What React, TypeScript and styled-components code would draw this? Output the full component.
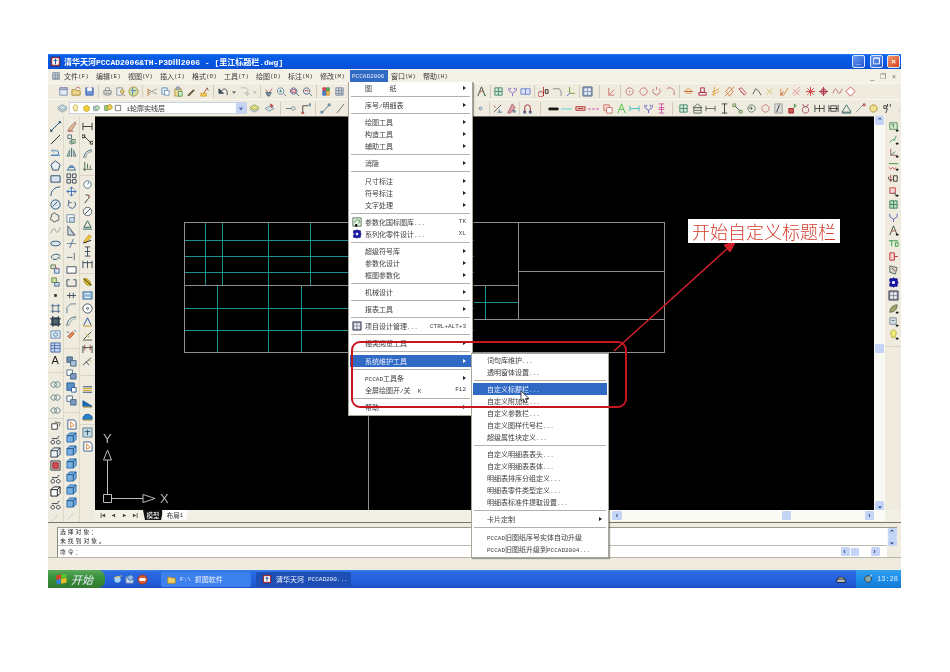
import React from "react";
import styled, { createGlobalStyle } from "styled-components";

const CJK = '"Noto Sans CJK SC", "Liberation Sans", sans-serif';
const MIX = '"Liberation Mono", "Noto Sans CJK SC", monospace';
const CREAM = "#efecdf";

const Global = createGlobalStyle`
  html, body { margin: 0; padding: 0; background: #fff; }
  body { width: 950px; height: 672px; overflow: hidden; font-family: ${CJK}; }
`;

type G = [string, string?, string?];
const IC: Record<string, G[]> = {
  newdoc: [["M2 2h8v8H2z", "#7d8ca8", "#e6ecf6"], ["M2 2h8v2H2z", "#7d8ca8", "#b9c8e6"]],
  open: [["M1 4h4l1 1h4v5H1z", "#a98a3a", "#ecd68c"], ["M5 3l3-2 2 2", "#c05a4a"]],
  save: [["M2 2h8v8H2z", "#3f62a8", "#6f94d8"], ["M4 2h4v3H4z", "#fff", "#fff"]],
  print: [["M2 5h8v4H2z", "#8a8a8a", "#d8d8d8"], ["M4 2h4v3H4zM4 8h4v2H4z", "#8a8a8a", "#fff"]],
  preview: [["M2 2h6v8H2z", "#8a94a8", "#f0f0f0"], ["M8 8a2 2 0 1 0-.1 0zM9 9l2 2", "#a07a30", "#e8d890"]],
  publish: [["M6 1a5 5 0 1 0 .1 0z", "#a0903a", "#cfe0a0"], ["M3 5h6M5 2v8", "#5a7fc8"]],
  cut: [["M1 8l10-5M1 4l10 5", "#9a9a9a"], ["M1 3.5a1.3 1.3 0 1 0 .1 0zM1 7.500a1.3 1.3 0 1 0 .1 0z", "#d08030"]],
  copy: [["M2 2h6v7H2z", "#6f93b8", "#dbe9f6"], ["M5 5h5v5H5z", "#6f93b8", "#fff"]],
  paste: [["M2 3h7v8H2z", "#b09a50", "#e8d890"], ["M4 1h3v3H4z", "#7a8a9a", "#b8c8d8"], ["M6 6h4v5H6z", "#5a9a5a", "#d8f0d8"]],
  brush: [["M2 10l6-6 1 1-6 6z", "#6a5a3a", "#7a6a4a"]],
  match: [["M2 8h6v3H2z", "#d8a040", "#f0d050"], ["M5 8l4-6", "#c05040"], ["M9 2l1 3", "#5a5a5a"]],
  undo: [["M10 10V6a3 3 0 0 0-5-2L3 6", "#44505e"], ["M1 3v5h5z", "#44505e", "#44505e"]],
  redo: [["M2 2h5a3 3 0 0 1 2 5l-1 3", "#b8b8b0"], ["M6 7l3 4 2-3z", "#c8c8c0", "#c8c8c0"]],
  drop: [["M4 6h4l-2 3z", "#6a6a6a", "#6a6a6a"]],
  dropl: [["M4 6h4l-2 3z", "#c0c0b8", "#c0c0b8"]],
  pan: [["M3 4l3 4 4-5", "#c05868"], ["M3 7h6l-2 4H5z", "#5a7080", "#7a90a0"]],
  zoomrt: [["M5 2a3.500 3.500 0 1 0 .1 0z", "#6a8aa0", "#e8f0f4"], ["M8 8l3 3", "#6a7a8a"], ["M3.500 5.500h3M5 4v3", "#4a8a5a"]],
  zoomwin: [["M5 2a3.500 3.500 0 1 0 .1 0z", "#4a6a90", "#e0e8f8"], ["M8 8l3 3", "#4a5a70"], ["M3 4h4v3H3z", "#c05050"]],
  zoomprev: [["M5 2a3.500 3.500 0 1 0 .1 0z", "#5a6a80", "#e0e4ea"], ["M8 8l3 3", "#5a6a80"], ["M3 5h4", "#c04040"]],
  props: [["M2 2h3v3H2z", "#c03048", "#e06070"], ["M6 2h3v3H6z", "#3a8a4a", "#60c070"], ["M2 6h3v4H2z", "#2a5ab0", "#6090e0"], ["M6 6h3v4H6z", "#d09030", "#f0c050"]],
  grid: [["M2 2h8v8H2z", "#7a8898", "#d8e2ee"], ["M2 5h8M2 8h8M5 2v8M8 2v8", "#7a8898"]],
  compass: [["M6 1L2 11M6 1l4 10", "#3a4a3a"], ["M4 7l4-2", "#c05030"], ["M9 8l1 3", "#3a8a3a"]],
  gridsq: [["M2 2h8v8H2z", "#4a8a6a", "#d0e8d8"], ["M2 6h8M6 2v8", "#4a8a6a"]],
  ybranch: [["M2 2v3l4 3 4-3V2M6 8v3M4 2v2M8 2v2", "#8a60c8"]],
  ybrancht: [["M2 2v3l4 3 4-3V2M6 8v3M4 2v2M8 2v2", "#5a5ac0"]],
  rect2: [["M1 3h10v6H1z", "#6a80d0", "#dde4fa"], ["M6 3v6", "#6a80d0"]],
  dimcross: [["M6 1v10", "#b03030"], ["M3 6a3 3 0 1 0 .1 0z", "#b03030"], ["M8 4h3v4H8z", "#302020"]],
  corner: [["M2 3h7l2 3v5", "#888"]],
  lshape: [["M5 1v7h6", "#70a030"], ["M5 8L2 11", "#4a6ad0"]],
  gridicon: [["M1 1h10v10H1z", "#59708a", "#8ca0b8"], ["M3 3h2v2H3zM7 3h2v2H7zM3 7h2v2H3zM7 7h2v2H7z", "#eef", "#eef"]],
  redL: [["M3 2v8l6-6M3 10h6", "#cf7070"]],
  circ: [["M6 2a4 4 0 1 0 .1 0z", "#c47470"], ["M6 5.500a.5 .5 0 1 0 .1 0z", "#c47470"]],
  circ2: [["M6 2a4 4 0 1 0 .1 0z", "#c47470"]],
  arc: [["M3 3a4 4 0 1 0 6 0", "#c47470"], ["M6 1v3", "#c47470"]],
  arc2: [["M2 3a5 5 0 0 1 8 3v4", "#c47470"]],
  hat: [["M3 6a3 3 0 0 1 6 0", "#e0a040"], ["M1 6h10", "#c05030"], ["M3 8h6", "#e0a040"]],
  stamp: [["M4 2h4v5H4z", "#b02850"], ["M2 7h8v3H2z", "#b02850"]],
  zig: [["M2 7l8-4M2 10l8-4M5 1L4 11", "#e0a040"]],
  dcross: [["M6 1l4 5-4 5-4-5zM1 11L11 1", "#d08040"]],
  chain: [["M2 3l3-1 5 6-2 2zM3 4l5 6", "#c05868"]],
  hook: [["M2 9l3-6 3 2 3 5", "#555"]],
  xy: [["M3 3l6 6M9 3l-6 6", "#d8c060"]],
  orangeL: [["M3 3v7h3l5-8", "#d08a30"], ["M3 10l3-4", "#c04040"]],
  slashes: [["M10 1L1 9M10 4L3 11M2 3l7 7", "#e098a0"]],
  star: [["M6 1v10M1 6h10M2.500 2.500l7 7M9.500 2.500l-7 7", "#cf4040"]],
  target: [["M6 3a3 3 0 1 0 .1 0z", "#a83048", "#e0a0a8"], ["M6 1v10M1 6h10", "#a83048"]],
  wave: [["M1 8c2-6 3-6 5-2s3 2 5-3", "#c06070"]],
  diamond: [["M6 1l5 5-5 5-5-5z", "#cf5050", "#fff"]],
  layers: [["M1 5l5-3 5 3-5 3z", "#7f98a8", "#cfdce4"], ["M1 7l5 3 5-3", "#7f98a8"]],
  layersY: [["M1 5l5-3 5 3-5 3z", "#9aa048", "#e0e088"], ["M1 7l5 3 5-3", "#7f98a8"]],
  layersB: [["M1 6l5-3 5 3-5 3z", "#7f98a8", "#cfdce4"], ["M7 1l3 2-2 2z", "#c05050", "#c05050"]],
  bulb: [["M6 1a3.500 3.500 0 0 1 2 6v2H4V7a3.500 3.500 0 0 1 2-6z", "#b8a840", "#f6f0a8"]],
  sun: [["M6 2a4 4 0 1 0 .1 0z", "#c0a020", "#f0d030"]],
  leaf: [["M2 3h5v6H2z", "#8a9aa8", "#c0ccd8"], ["M7 2a3 3 0 1 0 .1 0z", "#7a9a7a", "#b8d8b8"]],
  bulbg: [["M2 3h4v6H2z", "#6a9a5a", "#a8d070"], ["M8 2a3 3 0 1 0 .1 0z", "#b09030", "#f0d050"]],
  box: [["M2 2h8v8H2z", "#444", "#fff"]],
  node: [["M1 6h6", "#6a7a8a"], ["M9 4a2 2 0 1 0 .1 0z", "#6a7a8a"]],
  cornerd: [["M3 11V3h6", "#444"], ["M10 1h2v2h-2z", "#4a7a9a"], ["M2 10h2v2H2z", "#c04040"]],
  angle: [["M2 11L10 2", "#6a7a8a"], ["M9 1h2v2H9zM1 9h2v2H1z", "#4a7a9a"]],
  slash: [["M2 11L10 1", "#6a6a6a"]],
  dot: [["M6 4.500a1.500 1.500 0 1 0 .1 0z", "#4a7aa0"]],
  pen: [["M2 10L10 2", "#5a5a5a"], ["M6 10h5M8 7v3", "#4a7a9a"], ["M2 3l2 2", "#c05030"]],
  grad: [["M3 11L8 1l3 4-5 6z", "#b06070", "#e0a0a8"], ["M9 8h2v2H9z", "#4a6a8a"]],
  magnet: [["M3 10V5a3 3 0 0 1 6 0v5", "#a02030", undefined], ["M2 9h2v2H2zM8 9h2v2H8z", "#304070"]],
  lblack: [["M1 5.500h10v2H1z", "#111", "#111"]],
  lcyan: [["M0 6.500h12", "#50d0d0"]],
  lred: [["M1 4h10v4H1z", "#b03030", "#f0d0d0"], ["M3 6h6", "#b03030"]],
  lmag: [["M0 6.500h3M4.500 6.500h3M9 6.500h3", "#d040c0"]],
  swatch: [["M2 2h6v6H2z", "#cf7060", "#f8e0d8"], ["M5 5h6v6H5z", "#cf7060", "#fff"]],
  greenA: [["M2 11L6 1l4 10M3.500 7h5", "#40c040"]],
  dimcyan: [["M1 3v6M11 3v6M1 6h10", "#40c0c0"]],
  pinkI: [["M3 1h6M3 11h6M6 1v10", "#d050a0"], ["M3 5h6M3 7h6", "#d050a0"]],
  house: [["M6 1L1 5h10zM2 5h8v6H2zM2 8h8", "#5a6a5a"]],
  dimH: [["M1 3v6M11 3v6M1 6h10", "#5a6a5a"]],
  ibeam: [["M3 1h6M3 11h6M6 1v10", "#3a3a3a"]],
  diag: [["M3 3l6 6", "#3a5a6a"], ["M1 1h3v3H1zM8 8h3v3H8z", "#6a8a4a"]],
  circdot: [["M6 2a4 4 0 1 0 .1 0z", "#5a7a6a"], ["M3 6l3-2", "#5a7a6a"], ["M5.500 5.500h1v1h-1z", "#333"]],
  darkj: [["M2 1h8v10H2z", "#999", "#ddd"], ["M7 2L4 10", "#333"]],
  cubered: [["M2 6h5v5H2z", "#a02030", "#d06050"], ["M8 1l2 2-2 2z", "#3a8a3a"]],
  bell: [["M3 1a3 3 0 0 0 6 0M6 4a3.500 3.500 0 1 0 .1 0z", "#a05070"]],
  hH: [["M1 2v8M6 2v8M11 2v8M1 6h10", "#444"]],
  fieldbox: [["M1 2v8M11 2v8M1 6h10M3 3h6v6H3z", "#444"]],
  tri: [["M6 2L1 10h10zM1 11h10", "#3a6a6a"]],
  curveu: [["M1 10l8-8", "#8a9a9a"], ["M9 1h2v2H9z", "#b04040"]],
  cirq: [["M6 2a4 4 0 1 0 .1 0z", "#b09040", "#f0e090"]],
  key: [["M2 3h3v3H2zM6 1v3M9 1v3M6 6l-2 5", "#3a3a3a"]],
  faint: [["M2 10L9 3", "#c8c8c0"]],
  line: [["M1 11L11 1", "#1a4a70"], ["M10 0h2v2h-2zM0 10h2v2H0z", "#1a4a70"]],
  pline: [["M1 11L11 1", "#222"]],
  ucurve: [["M1 9h6a2.500 2.500 0 0 0 0-5H4", "#3a78c0"], ["M4 2L2 4l2 2", "#3a78c0"], ["M1 9h10", "#3a78c0"]],
  polygon: [["M6 1l5 4-2 6H3L1 5z", "#2a4a6a", "#e8eef4"]],
  rectg: [["M1 3h10v7H1z", "#2a4a6a", "#d8e4f0"]],
  arcb: [["M1 11C1 5 5 1 11 1", "#1a4a70"]],
  circleb: [["M6 1a5 5 0 1 0 .1 0z", "#1a4a70", "#e0e8f0"], ["M3 8l5-5", "#1a4a70"]],
  cloud: [["M3 2c2-2 4 0 4 1 2-1 4 2 2 3 2 2 0 5-2 3-1 3-4 2-4 0-3 1-3-4-1-4-1-2 0-3 1-3z", "#3a4a5a"]],
  spline: [["M1 9c2-6 4-6 5-3s3 3 5-3", "#8a9a9a"]],
  ellipse: [["M6 3.500c7 0 7 5 0 5s-7-5 0-5z", "#1a4a70", "#e0e8f0"]],
  earc: [["M2 8c-2-5 9-6 9-2", "#1a4a70"], ["M8 7l3 1", "#1a4a70"], ["M3 9h5", "#1a4a70"]],
  insert: [["M1 1h5v4H1z", "#6a7a5a", "#d8e0c8"], ["M5 5h5v5H5z", "#4a6aa8", "#d8e0f0"], ["M6 3l3 3", "#c06030"]],
  block: [["M2 1h5v5H2z", "#6a8a4a", "#d0e0a0"], ["M5 6h5v4H5z", "#4a6a8a", "#c8d8e8"]],
  point: [["M5 5h2v2H5z", "#333", "#333"]],
  hatch: [["M3 1v10M9 1v10M1 3h10M1 9h10", "#4a6a8a"]],
  hatchd: [["M2 2h8v8H2z", "#2a3a4a", "#56626e"], ["M3 0v12M9 0v12M0 3h12M0 9h12", "#2a3a4a"]],
  region: [["M1 2h10v8H1z", "#6a90b0", "#d8e8f4"], ["M6 4a2 2 0 1 0 .1 0z", "#5a7a9a"]],
  table: [["M1 1h10v10H1z", "#4a6aa8", "#c8d8f4"], ["M1 4h10M1 7h10M5 1v10", "#4a6aa8"]],
  ring: [["M4 3a3 3 0 1 0 .1 0zM8 3a3 3 0 1 0 .1 0z", "#5a8088"]],
  erase: [["M2 11l2-4 6-6 1 2-5 7z", "#9a8a80", "#e8b890"], ["M2 11h6", "#c04050"]],
  clone: [["M2 1h4v4H2z", "#5a6a7a"], ["M6 7a2 2 0 1 0 .1 0z", "#5a6a7a"], ["M6 6h4v4H6z", "#4a8a5a"]],
  mirror: [["M6 1v10", "#4a6a6a"], ["M4 3v7L1 10z", "#6a8a8a", "#a8c0c0"], ["M8 3v7l3 0z", "#6a8a8a", "#a8c0c0"]],
  offset: [["M2 11a4 4 0 0 1 8 0", "#3a7ab0"], ["M4 8a2 2 0 0 1 4 0z", "#3a6a90", "#8ac0e8"], ["M1 11h10", "#3a6a90"]],
  array: [["M1 1h4v4H1zM7 1h4v4H7zM1 7h4v4H1zM7 7h4v4H7z", "#3a4a5a"]],
  move: [["M6 1v10M1 6h10", "#3a70b0"], ["M4 3l2-2 2 2M4 9l2 2 2-2M3 4L1 6l2 2M9 4l2 2-2 2", "#3a70b0"]],
  rotate: [["M9 3a4 4 0 1 1-6 1", "#3a6080"], ["M3 1v3h3", "#3a6080"]],
  scale: [["M1 3h8v8H1z", "#6a8aa0", "#fff"], ["M4 6h5v5H4z", "#6a8aa0", "#d0e0ec"]],
  stretch: [["M2 11V1l8 10z", "#4a5a6a", "#d0d8e0"], ["M5 5l3 5", "#6a7a8a"]],
  trim: [["M1 6h10", "#7a8a9a"], ["M8 1L4 11", "#4a70a0"]],
  extend: [["M1 7h6", "#5a6a7a"], ["M9 2v8", "#5a6a7a"]],
  rectline: [["M1 3h10v7H1z", "#3a4a5a", "#fff"]],
  rectgap: [["M1 3v7h10V3M1 3h3M8 3h3", "#3a4a5a"]],
  join: [["M1 6h10", "#3a4a5a"], ["M4 3v6M8 3v6", "#3a4a5a"]],
  chamfer: [["M1 11V5l4-4h6", "#5a7a9a"]],
  fillet: [["M1 11C1 5 5 1 11 1", "#3a5a7a"], ["M3 11C3 7 7 3 11 3", "#8aa"]],
  explode: [["M2 8l5-5 2 2-5 5z", "#c05030", "#e09060"], ["M9 1l2 2M1 3l2 1", "#3060b0"]],
  bluesq: [["M1 1h6v6H1z", "#4a6a8a", "#6a8ab0"], ["M5 5h6v6H5z", "#4a6a8a", "#a8c0d8"]],
  bluew: [["M1 1h6v6H1z", "#4a6a8a", "#fff"], ["M5 5h6v6H5z", "#4a6a8a", "#7a9ac0"]],
  bluebig: [["M1 1h8v8H1z", "#2a5a9a", "#5a90c8"], ["M6 6h5v5H6z", "#2a5a9a", "#fff"]],
  cube: [["M1 4l3-3h7v7l-3 3H1zM1 4h7v7M8 4l3-3", "#2a3a4a", "#eef2f6"]],
  cubeb: [["M1 4l3-3h7v7l-3 3H1z", "#2a70b0", "#78aee0"], ["M1 4h7v7M8 4l3-3", "#16507c"]],
  cuber: [["M1 1h10v10H1z", "#333", "#ddd"], ["M3 3h6v6H3z", "#a02030", "#d05050"]],
  cubed: [["M1 4l3-3h7v7l-3 3H1z", "#111", "#fff"], ["M1 4h7v7M8 4l3-3", "#111"]],
  bike: [["M3 7a2 2 0 1 0 .1 0zM9 7a2 2 0 1 0 .1 0zM2 5h6l2-3", "#2a3a4a"]],
  d3box: [["M2 3h6v6H2z", "#333", "#fff"], ["M5 1l6 1-1 4", "#666"]],
  dline: [["M1 3h10M1 9h10", "#2a4a6a"], ["M1 5h10M1 7h10", "#d0a020"]],
  dtri: [["M1 3l10 6H1z", "#1a5a9a", "#1a70b8"], ["M1 10h10", "#b09030"]],
  dcurve: [["M1 9C1 3 7 2 11 6v3z", "#1a5a9a", "#2a80c8"], ["M1 10h10", "#b09030"]],
  table2: [["M1 1h10v10H1z", "#5a8090", "#c0d8e0"], ["M3 5h6M6 3v6", "#305070"]],
  pick: [["M2 1h7l2 3v7H2z", "#3a5a8a", "#fff"], ["M5 3v6l4-2z", "#e08030"]],
  cdim: [["M1 2v8M11 2v8M1 6h10", "#333"]],
  cdiag: [["M2 2l8 8", "#333"], ["M0 1h3v3H0zM9 8h3v3H9z", "#333"]],
  arcdim: [["M2 11A9 9 0 0 1 11 2", "#3a6a8a"], ["M4 11A7 7 0 0 1 11 4", "#8a8a8a"]],
  ordin: [["M3 1v10M1 9h10M6 3v5M9 5v3", "#4a6a4a"]],
  cang: [["M6 2a4 4 0 1 0 .1 0z", "#4a6a8a", "#fff"], ["M6 6l2-3", "#4a6a8a"]],
  hand: [["M4 2c4 0 5 3 2 5l-3 4", "#333"], ["M7 2l2 2", "#b04030"]],
  cdiam: [["M6 1.500a4.500 4.500 0 1 0 .1 0z", "#3a4a5a", "#fff"], ["M3 9l6-6", "#3a4a5a"]],
  ctri: [["M6 2L2 9h8zM1 11h10", "#2a5a5a"]],
  edit: [["M2 9l6-7 2 2-6 7z", "#c09030", "#f0d040"], ["M1 11l9-3", "#222"]],
  ih: [["M3 1h6M3 11h6M6 1v10M3 6h6", "#3a4a5a"]],
  hh: [["M1 2v8M6 2v8M11 2v8M1 4h10", "#3a4a5a"]],
  leafy: [["M2 3c4-1 7 2 8 7-5 1-8-2-8-7z", "#b09020", "#d8c030"], ["M2 3l8 7", "#222"]],
  gtable: [["M1 2h10v8H1z", "#4a7aa0", "#90b8d8"], ["M3 4h6M3 8h6", "#fff"]],
  cen: [["M6 1a5 5 0 1 0 .1 0z", "#3a4a5a", "#fff"], ["M6 5a1 1 0 1 0 .1 0z", "#3a4a5a"]],
  dimA: [["M2 10L6 2l4 8", "#1a4a9a"], ["M1 11h10", "#c09020"]],
  dslope: [["M2 10l8-8", "#3a5030"], ["M4 4l4 4", "#b09030"], ["M1 11h10", "#4a5a4a"]],
  dtwo: [["M1 3v8M11 3v8M1 5h10", "#3a4a4a"], ["M3 2v6M9 2v6", "#a04040"]],
  dtilt: [["M1 10l9-8M4 6l4 4", "#3a4a5a"], ["M7 3l3 3", "#c09030"]],
  rp: [["M2 2h8v7H2z", "#4a8a5a", "#d8ecd0"], ["M4 4h2v3", "#3a7a4a"], ["M9 10h2v1H9z", "#111", "#111"]],
  rpath: [["M2 9l3-3 2 1 2-5", "#3a9a5a"], ["M9 10h2v1H9z", "#111", "#111"]],
  rl: [["M3 2v7h7", "#a05a6a"], ["M3 9l5-4", "#4a8a5a"], ["M9 10h2v1H9z", "#111", "#111"]],
  rtext: [["M1 4h10", "#3a8a3a"], ["M1 8l2 2 2-2 2 2 2-2", "#c04040"], ["M9 10h2v1H9z", "#111", "#111"]],
  rdim: [["M3 2v8", "#c04040"], ["M1 4a2 2 0 1 0 4 3M6 3h4v6H6z", "#332"]],
  rsq: [["M2 2h6v6H2z", "#c04040", "#f8d8d8"], ["M5 8h3v3", "#666"], ["M9 10h2v1H9z", "#111", "#111"]],
  rg: [["M2 2h8v8H2z", "#3a7a5a", "#b8e0c0"], ["M2 6h8M6 2v8", "#3a7a5a"]],
  rb: [["M2 2v3l4 3 4-3V2M6 8v3", "#5a60c0"]],
  rk: [["M6 1L2 11M6 1l4 10", "#3a4a3a"], ["M4 7l4-1", "#c05030"], ["M9 10h2v1H9z", "#111", "#111"]],
  rtest: [["M1 3h10M4 3v6M8 5h3v4H8z", "#2a9a3a"]],
  rfrac: [["M2 2h5v8H2z", "#c03030", "#f0d0d0"], ["M7 6h4", "#c03030"]],
  rcomp: [["M2 2l8 2-2 7-6-2z", "#5a6a5a", "#cdd8cd"], ["M4 4l4 4", "#b04040"]],
  puzzle: [["M2 2h3a1 1 0 0 1 2 0h3v3a1 1 0 0 1 0 2v3H7a1 1 0 0 1-2 0H2V7a1 1 0 0 0 0-2z", "#10108a", "#1a1aa8"], ["M5 5h2v2H5z", "#fff", "#fff"]],
  rgrid: [["M1 1h10v10H1z", "#445", "#8a92a8"], ["M3 3h2v2H3zM7 3h2v2H7zM3 7h2v2H3zM7 7h2v2H7z", "#eee", "#eee"]],
  rfeather: [["M2 10c0-5 4-8 8-8 0 5-3 8-8 8z", "#6a7048", "#a0a070"], ["M9 10h2v1H9z", "#111", "#111"]],
  rcard: [["M2 2h7v7H2z", "#7a8a9a", "#d8e0e8"], ["M4 5h3", "#567"], ["M9 10h2v1H9z", "#111", "#111"]],
  rbulb: [["M6 1a3.500 3.500 0 0 1 2 6v2H4V7a3.500 3.500 0 0 1 2-6z", "#b8b030", "#f0ec80"], ["M9 10h2v1H9z", "#111", "#111"]],
  param: [["M1 1h10v10H1z", "#4a6a4a", "#e8f0e8"], ["M3 7c1-4 3-4 6-3l-1 4", "#3a8a3a"], ["M4 9h2v2H4z", "#111", "#111"]],
  ie: [["M6 2a4 4 0 1 0 .1 0z", "#1a6ac8", "#a8d0f4"], ["M2 4l9-2", "#f0c040"]],
  desk: [["M1 3h8v7H1z", "#607ab0", "#d0dcf0"], ["M6 1a3 3 0 1 1-.1 0z", "#3a6ab0", "#90b8e8"]],
  fox: [["M6 1a5 5 0 1 0 .1 0z", "#a03020", "#d85a30"], ["M3 5h6v2H3z", "#fff", "#fff"]],
  tray: [["M1 6h10v4H1z", "#111", "#ccc"], ["M3 4h6v2H3z", "#333", "#eee"]],
  speaker: [["M6 2a4 4 0 1 0 .1 0z", "#333", "#8aa"], ["M8 3l3-2", "#eee"]],
  folder: [["M1 3h4l1 1h5v7H1z", "#b08a20", "#f0d060"]],
  logo: [["M1 1h10v10H1z", "#104090", "#d83020"], ["M3 3h6v6H3z", "#fff", "#fff"], ["M4 5h4M6 3v6", "#1040a0"]],
  winlogo: [["M1 2l4-1v4l-4 1z", "#e04020", "#e04020"], ["M6 1l5-1v4l-5 1z", "#60c030", "#60c030"], ["M1 7l4-1v4l-4 1z", "#3080e0", "#3080e0"], ["M6 6l5-1v4l-5 1z", "#f0c020", "#f0c020"]],
};

const Ico = ({ n, s = 12 }: { n: string; s?: number }) => (
  <svg width={s} height={s} viewBox="0 0 12 12" fill="none" strokeWidth={1}>
    {(IC[n] || []).map((g, i) => (
      <path key={i} d={g[0]} stroke={g[1]} fill={g[2] || "none"} />
    ))}
  </svg>
);

const Page = styled.div`
  width: 950px;
  height: 672px;
  padding: 54px 0 0 48px;
  box-sizing: border-box;
  background: #fff;
`;
const Win = styled.div`
  position: relative;
  width: 853px;
  height: 534px;
  display: flex;
  flex-direction: column;
  overflow: hidden;
  background: ${CREAM};
  color: #333;
  filter: blur(0.5px);
`;
const TitleBar = styled.div`
  height: 15px;
  flex: none;
  display: flex;
  align-items: center;
  gap: 3px;
  padding: 0 1px 0 2px;
  background: linear-gradient(180deg, #2a80f0 0, #0a5ee6 12%, #0654e0 70%, #0a4ed0 100%);
  color: #fff;
  font: bold 8px ${MIX};
  white-space: pre;
`;
const TitleText = styled.span`
  flex: 1;
`;
const WinBtn = styled.div<{ $close?: boolean }>`
  width: 13px;
  height: 13px;
  margin-left: 1.500px;
  box-sizing: border-box;
  border: 1px solid #dfe8fb;
  border-radius: 2px;
  background: ${(p) => (p.$close ? "linear-gradient(135deg,#ee9a70,#d8401c)" : "linear-gradient(135deg,#6a9af0,#2458d0)")};
  color: #fff;
  font: bold 8px/11px "Liberation Sans", sans-serif;
  text-align: center;
`;
const MenuBar = styled.div`
  height: 14px;
  flex: none;
  display: flex;
  align-items: center;
  padding-left: 3px;
  background: #f3f1e6;
  font: 7px ${CJK};
  color: #3a3a3a;
`;
const AppIcon = styled.span`
  width: 13px;
  display: flex;
`;
const MenuName = styled.span`
  width: 32px;
  height: 13px;
  flex: none;
  display: flex;
  align-items: center;
  white-space: pre;
`;
const ActiveMenuName = styled.span`
  width: 38px;
  height: 13px;
  margin: 0 3px 0 -2px;
  padding-left: 2px;
  box-sizing: border-box;
  flex: none;
  display: flex;
  align-items: center;
  white-space: pre;
  background: #316ac5;
  color: #e8eefc;
  font: 6px ${MIX};
`;
const MdiBtns = styled.span`
  margin-left: auto;
  padding-right: 5px;
  font: 7px/1 "Liberation Sans", sans-serif;
  color: #666;
  white-space: pre;
`;
const ToolBand = styled.div<{ $h: number }>`
  height: ${(p) => p.$h}px;
  flex: none;
  display: flex;
  align-items: center;
  overflow: hidden;
  background: ${CREAM};
  border-top: 1px solid #f8f6ee;
  box-sizing: border-box;
`;
const Spacer = styled.div<{ $w: number }>`
  width: ${(p) => p.$w}px;
  flex: none;
`;
const Cell = styled.span<{ $w: number }>`
  width: ${(p) => p.$w}px;
  flex: none;
  display: flex;
  justify-content: center;
  align-items: center;
`;
const VSep = styled.span<{ $w: number }>`
  width: ${(p) => p.$w}px;
  height: 13px;
  flex: none;
  display: flex;
  justify-content: center;
  &::after {
    content: "";
    width: 1px;
    background: #d0cdbc;
  }
`;
const Strip = styled.div`
  display: flex;
  align-items: center;
  flex: none;
`;
const HIcons = ({ set, cell = 13.5, size = 11 }: { set: string; cell?: number; size?: number }) => (
  <Strip>
    {set.split(" ").map((t, i) =>
      t[0] === "|" ? (
        <VSep key={i} $w={Number(t.slice(1))} />
      ) : t[0] === "~" ? (
        <Cell key={i} $w={Number(t.slice(1).split(":")[0])}>
          <Ico n={t.split(":")[1]} s={size} />
        </Cell>
      ) : (
        <Cell key={i} $w={cell}>
          <Ico n={t} s={size} />
        </Cell>
      )
    )}
  </Strip>
);
const Combo = styled.div`
  width: 178px;
  height: 12px;
  flex: none;
  box-sizing: border-box;
  background: #fff;
  border: 1px solid #c9d3e6;
  display: flex;
  align-items: center;
  padding-left: 1px;
  gap: 1.500px;
  font: 7px ${CJK};
  color: #333;
`;
const ComboLabel = styled.span`
  flex: 1;
  margin-left: 3px;
`;
const ComboArrow = styled.span`
  width: 10px;
  height: 10px;
  flex: none;
  background: #c6d4f4;
  display: flex;
  align-items: center;
  justify-content: center;
  color: #2a4a90;
  font: bold 6px "Liberation Sans", sans-serif;
`;

const Main = styled.div`
  flex: none;
  height: 406px;
  display: flex;
`;
const Dock = styled.div`
  width: 47px;
  flex: none;
  display: flex;
  overflow: hidden;
`;
const DockCol = styled.div<{ $w: number; $last?: boolean }>`
  width: ${(p) => p.$w}px;
  flex: none;
  padding-top: 4px;
  box-sizing: border-box;
  border-right: ${(p) => (p.$last ? "0" : "1px solid #dcd9c9")};
  display: flex;
  flex-direction: column;
  align-items: center;
`;
const DCell = styled.span<{ $h: number }>`
  height: ${(p) => p.$h}px;
  flex: none;
  display: flex;
  align-items: center;
`;
const DSep = styled.span<{ $h: number }>`
  height: ${(p) => p.$h}px;
  width: 100%;
  flex: none;
  display: flex;
  flex-direction: column;
  justify-content: center;
  &::after {
    content: "";
    height: 1px;
    background: #d8d5c4;
  }
`;
const TextTool = styled.span`
  font: 11px/1 "Liberation Sans", sans-serif;
  color: #222;
`;
const VIcons = ({ set, cell = 13 }: { set: string; cell?: number }) => (
  <>
    {set.split(" ").map((t, i) =>
      t[0] === "|" ? (
        <DSep key={i} $h={Number(t.slice(1))} />
      ) : (
        <DCell key={i} $h={cell}>
          {t === "A" ? <TextTool>A</TextTool> : <Ico n={t} s={11} />}
        </DCell>
      )
    )}
  </>
);
const Center = styled.div`
  flex: 1;
  min-width: 0;
  display: flex;
  flex-direction: column;
`;
const CanvasRow = styled.div`
  height: 394px;
  flex: none;
  display: flex;
`;
const Canvas = styled.div`
  width: 779px;
  flex: none;
  background: #000;
  box-shadow: inset 0 1px 0 #6a6a60;
`;
const Drawing = styled.svg`
  display: block;
`;
const VScroll = styled.div`
  width: 11px;
  flex: none;
  background: #f9f9f4;
  display: flex;
  flex-direction: column;
  align-items: center;
  justify-content: space-between;
  position: relative;
`;
const ScrollBtn = styled.span<{ $w?: number; $h?: number }>`
  width: ${(p) => p.$w || 9}px;
  height: ${(p) => p.$h || 9}px;
  flex: none;
  border-radius: 1.500px;
  background: #c4d4f6;
  color: #24427e;
  display: flex;
  align-items: center;
  justify-content: center;
  font: bold 7px/1 "Liberation Sans", sans-serif;
`;
const VThumb = styled.span`
  position: absolute;
  top: 228px;
  left: 1px;
  width: 9px;
  height: 9px;
  background: #c4d4f6;
  border-radius: 1px;
`;
const RightDock = styled.div`
  width: 16px;
  flex: none;
  height: 394px;
`;
const RightPanel = styled.div`
  height: 231px;
  padding-top: 4px;
  box-sizing: border-box;
  border-bottom: 1px solid #d8d5c4;
  display: flex;
  flex-direction: column;
  align-items: center;
`;
const TabRow = styled.div`
  height: 12px;
  flex: none;
  display: flex;
  align-items: flex-start;
  background: #f2f0e4;
`;
const NavBtns = styled.div`
  width: 46px;
  padding-left: 2px;
  flex: none;
  display: flex;
  align-items: center;
  height: 11px;
`;
const NavBtn = styled.span`
  width: 11px;
  flex: none;
  text-align: center;
  font: bold 6px/11px "Liberation Sans", sans-serif;
  color: #444;
`;
const Tab = styled.span<{ $on?: boolean; $w: number }>`
  width: ${(p) => p.$w}px;
  height: 10px;
  flex: none;
  display: flex;
  align-items: center;
  justify-content: center;
  margin-right: -1px;
  font: 6.500px ${CJK};
  color: ${(p) => (p.$on ? "#fff" : "#333")};
  background: ${(p) => (p.$on ? "#111" : "#fff")};
  clip-path: polygon(0 0, 100% 0, calc(100% - 2px) 100%, 2px 100%);
`;
const TabSpace = styled.div`
  width: 423px;
  flex: none;
`;
const HScroll = styled.div`
  flex: 1;
  height: 11px;
  background: #fbfbf6;
  display: flex;
  align-items: center;
  padding: 0 4px 0 2px;
  margin-right: 16px;
`;
const Grow = styled.span<{ $w: number }>`
  width: ${(p) => p.$w}px;
  flex: none;
`;
const CmdArea = styled.div`
  height: 35px;
  flex: none;
  box-sizing: border-box;
  border-top: 1px solid #77756a;
  padding: 4px 4px 1px 9px;
`;
const CmdBox = styled.div`
  height: 29px;
  display: flex;
  background: #fff;
  border-left: 1px solid #8a8a80;
  border-top: 1px solid #9a988a;
`;
const CmdMain = styled.div`
  flex: 1;
  min-width: 0;
  display: flex;
  flex-direction: column;
`;
const CmdHist = styled.div`
  height: 18px;
  flex: none;
  box-sizing: border-box;
  border-bottom: 1px solid #bdbbb0;
  padding-left: 2px;
`;
const CmdHistLine = styled.div`
  font: 5.800px/8.500px ${CJK};
  letter-spacing: 2px;
  color: #222;
`;
const CmdLine = styled.div`
  flex: 1;
  display: flex;
  align-items: center;
  padding-left: 2px;
  font: 5.800px/1 ${CJK};
  letter-spacing: 2px;
  color: #222;
`;
const CmdLabel = styled.span`
  flex: 1;
`;
const CmdBar = styled.div`
  display: flex;
  align-items: center;
  width: 46px;
  height: 10px;
  padding-left: 2px;
  gap: 1px;
`;
const CmdThumb = styled.span`
  width: 8px;
  height: 8px;
  background: #c4d4f6;
`;
const CmdScroll = styled.div`
  width: 10px;
  flex: none;
  background: ${CREAM};
  display: flex;
  flex-direction: column;
  align-items: center;
`;
const CmdScrollTrack = styled.div`
  height: 18px;
  background: #f6f6f0;
  width: 10px;
  display: flex;
  flex-direction: column;
  align-items: center;
`;
const Status = styled.div`
  height: 13px;
  flex: none;
  box-sizing: border-box;
  background: ${CREAM};
  border-top: 1px solid #b8b6a8;
`;
const Taskbar = styled.div`
  height: 18px;
  flex: 1;
  display: flex;
  align-items: center;
  background: linear-gradient(180deg, #3c84ea 0, #2a6ae0 12%, #2460dc 60%, #1c50c4 100%);
  color: #fff;
`;
const StartBtn = styled.div`
  width: 57px;
  height: 18px;
  flex: none;
  box-sizing: border-box;
  padding-left: 8px;
  gap: 4px;
  display: flex;
  align-items: center;
  background: linear-gradient(180deg, #5aa85a 0, #3a923c 40%, #307a30 100%);
  border-radius: 0 7px 7px 0;
  font: italic 11px ${CJK};
  color: #eef;
`;
const Quick = styled.div`
  width: 56px;
  padding-left: 7px;
  box-sizing: border-box;
  flex: none;
  display: flex;
  gap: 1.500px;
  align-items: center;
`;
const TaskBtn = styled.div<{ $on?: boolean; $w: number }>`
  width: ${(p) => p.$w}px;
  height: 15px;
  flex: none;
  margin-right: 5px;
  box-sizing: border-box;
  padding-left: 6px;
  gap: 4px;
  display: flex;
  align-items: center;
  border-radius: 2px;
  background: ${(p) => (p.$on ? "#1e4fb4" : "#3c80ee")};
  font: 7px ${CJK};
  color: #f2f4fc;
  white-space: pre;
`;
const TrayIcon = styled.span`
  margin-left: auto;
  margin-right: 10px;
  display: flex;
`;
const Clock = styled.div`
  width: 45px;
  height: 18px;
  flex: none;
  box-sizing: border-box;
  padding-left: 7px;
  gap: 4px;
  display: flex;
  align-items: center;
  background: linear-gradient(180deg, #2ea0f0 0, #1a8ae8 60%, #1478d0 100%);
  font: 7px "Liberation Mono", monospace;
  color: #dcecff;
`;

const Menu = styled.div<{ $x: number; $y: number; $w: number; $top?: number }>`
  position: absolute;
  left: ${(p) => p.$x}px;
  top: ${(p) => p.$y}px;
  width: ${(p) => p.$w}px;
  box-sizing: border-box;
  padding: 0 1px 2px;
  background: #fff;
  border: 1px solid #a8a698;
  border-top-width: ${(p) => p.$top || 0}px;
  box-shadow: 1px 1px 1px rgba(0, 0, 0, 0.35);
  font: 7px ${CJK};
  color: #3c3c3c;
`;
const MItem = styled.div<{ $on?: boolean; $pad: number }>`
  height: 12px;
  display: flex;
  align-items: center;
  position: relative;
  white-space: pre;
  padding: 0 5px 0 ${(p) => p.$pad}px;
  background: ${(p) => (p.$on ? "#316ac5" : "transparent")};
  color: ${(p) => (p.$on ? "#e8eefc" : "inherit")};
`;
const MIconSlot = styled.span`
  position: absolute;
  left: 2px;
  top: 1px;
  display: flex;
`;
const MLabel = styled.span`
  flex: 1;
`;
const Lat = styled.span`
  font: 6px "Liberation Mono", monospace;
`;
const MKey = styled.span`
  font: 6px "Liberation Mono", monospace;
`;
const MArrow = styled.span<{ $on?: boolean }>`
  width: 0;
  height: 0;
  border-left: 3px solid ${(p) => (p.$on ? "#fff" : "#222")};
  border-top: 2.500px solid transparent;
  border-bottom: 2.500px solid transparent;
`;
const MSep = styled.div`
  height: 5.150px;
  display: flex;
  flex-direction: column;
  justify-content: center;
  padding: 0 1px;
  &::after {
    content: "";
    height: 1px;
    background: #b4b2a6;
  }
`;
const Callout = styled.div`
  position: absolute;
  left: 640px;
  top: 165px;
  width: 152px;
  height: 24px;
  box-sizing: border-box;
  padding-left: 4px;
  background: #fff;
  display: flex;
  align-items: center;
  font: 300 18px/1 ${CJK};
  color: #d33a2c;
  white-space: nowrap;
`;
const RedRing = styled.div`
  position: absolute;
  left: 303px;
  top: 287px;
  width: 276px;
  height: 67px;
  box-sizing: border-box;
  border: 2px solid #c8141e;
  border-radius: 9px;
`;
const OverSvg = styled.svg`
  position: absolute;
  left: 560px;
  top: 185px;
`;
const Cursor = styled.svg`
  position: absolute;
  left: 472px;
  top: 336px;
`;

const Mixed = ({ t }: { t: string }) => (
  <>
    {t.split(/([\x20-\x7e]+)/).map((s, i) => (i % 2 ? <Lat key={i}>{s}</Lat> : s))}
  </>
);

type MI = { t?: string; a?: boolean; k?: string; i?: string; on?: boolean };
const MAIN: MI[] = [
  { t: "图\u3000\u3000\u2002纸", a: true }, {},
  { t: "序号/明细表", a: true }, {},
  { t: "绘图工具", a: true }, { t: "构造工具", a: true }, { t: "辅助工具", a: true }, {},
  { t: "消隐", a: true }, {},
  { t: "尺寸标注", a: true }, { t: "符号标注", a: true }, { t: "文字处理", a: true }, {},
  { t: "参数化国标图库...", k: "TK", i: "param" }, { t: "系列化零件设计...", k: "XL", i: "puzzle" }, {},
  { t: "超级符号库", a: true }, { t: "参数化设计", a: true }, { t: "框图参数化", a: true }, {},
  { t: "机械设计", a: true }, {},
  { t: "报表工具", a: true }, {},
  { t: "项目设计管理...", k: "CTRL+ALT+3", i: "rgrid" }, {},
  { t: "插突阅览工具", a: true }, {},
  { t: "系统维护工具", a: true, on: true }, {},
  { t: "PCCAD工具条", a: true }, { t: "全屏绘图开/关  K", k: "F12" }, {},
  { t: "帮助", a: true },
];
const SUB: MI[] = [
  { t: "词句库维护..." }, { t: "透明窗体设置..." }, {},
  { t: "自定义标题栏...", on: true }, { t: "自定义附加栏..." }, { t: "自定义参数栏..." }, { t: "自定义图样代号栏..." }, { t: "超级属性块定义..." }, {},
  { t: "自定义明细表表头..." }, { t: "自定义明细表表体..." }, { t: "明细表排序分组定义..." }, { t: "明细表零件类型定义..." }, { t: "明细表标准件提取设置..." }, {},
  { t: "卡片定制", a: true }, {},
  { t: "PCCAD旧图纸序号实体自动升级" }, { t: "PCCAD旧图纸升级到PCCAD2004..." },
];
const MenuList = ({ items, pad }: { items: MI[]; pad: number }) => (
  <>
    {items.map((m, i) =>
      m.t ? (
        <MItem key={i} $on={m.on} $pad={pad}>
          {m.i && (
            <MIconSlot>
              <Ico n={m.i} s={10} />
            </MIconSlot>
          )}
          <MLabel>
            <Mixed t={m.t} />
          </MLabel>
          {m.k && <MKey>{m.k}</MKey>}
          {m.a && <MArrow $on={m.on} />}
        </MItem>
      ) : (
        <MSep key={i} />
      )
    )}
  </>
);

const GREY = "#8e8e8e";
const TEAL = "#1f8f8f";
const CadDrawing = () => (
  <Drawing width={779} height={394} viewBox="95 116 779 394">
    <g stroke={TEAL} strokeWidth={1} shapeRendering="crispEdges" fill="none">
      <path d="M205.500 222v63M222.500 222v63M268.500 222v131M310.500 222v63M184 240.500h290M184 256.500h290M184 272.500h290" />
      <path d="M217.500 285v68M301.500 285v68M184 308.500h290M184 330.500h290M485.500 285v34M474 302.500h44" />
    </g>
    <g stroke={GREY} strokeWidth={1} shapeRendering="crispEdges" fill="none">
      <path d="M184.500 222.500h480v130h-480zM184 285.500h334M518.500 222v97M518 271.500h147M474 319.500h191M368.500 353v157" />
    </g>
    <g stroke="#bcbcbc" strokeWidth={1} fill="none">
      <path d="M107.500 460v34M112 498.500h31" />
      <path d="M107.500 450l-4 10h8zM143 494.500l12 4-12 4z" />
      <path d="M103.500 494.500h8v8h-8z" />
    </g>
    <g fill="#b4b4b4" fontFamily='"Liberation Sans", sans-serif' fontSize="13">
      <text x="103" y="443">Y</text>
      <text x="160" y="503">X</text>
    </g>
  </Drawing>
);

export default function App() {
  const rightIcons = "rp rpath rl rtext rdim rsq rg rb rk rtest rfrac rcomp puzzle rgrid rfeather rcard rbulb";
  return (
    <Page>
      <Global />
      <Win>
        <TitleBar>
          <Ico n="logo" s={11} />
          <TitleText>清华天河PCCAD2006&TH-P3DⅢ2006 - [里江标题栏.dwg]</TitleText>
          <WinBtn>_</WinBtn>
          <WinBtn>❐</WinBtn>
          <WinBtn $close>×</WinBtn>
        </TitleBar>
        <MenuBar>
          <AppIcon>
            <Ico n="grid" s={10} />
          </AppIcon>
          {["文件(F)", "编辑(E)", "视图(V)", "插入(I)", "格式(O)", "工具(T)", "绘图(D)", "标注(N)", "修改(M)"].map((t) => (
            <MenuName key={t}>
              <Mixed t={t} />
            </MenuName>
          ))}
          <ActiveMenuName>PCCAD2006</ActiveMenuName>
          <MenuName><Mixed t="窗口(W)" /></MenuName>
          <MenuName><Mixed t="帮助(H)" /></MenuName>
          <MdiBtns>_   ❐   ×</MdiBtns>
        </MenuBar>
        <ToolBand $h={16}>
          <Spacer $w={8.5} />
          <HIcons cell={13} set="newdoc open save |5 print preview publish |6 cut copy paste brush match |6 undo ~8:drop redo ~8:dropl |3 pan zoomrt zoomwin zoomprev |6 props grid" />
          <Spacer $w={129} />
          <HIcons set="compass |4 gridsq ybranch rect2 |4 dimcross corner lshape |4 gridicon |10 redL |5 circ circ2 arc arc2 |5 hat stamp zig dcross chain hook xy orangeL slashes star target wave diamond" />
        </ToolBand>
        <ToolBand $h={17}>
          <Spacer $w={8} />
          <HIcons cell={12} set="layers" />
          <Spacer $w={1} />
          <Combo>
            <Ico n="bulb" s={9} />
            <Ico n="sun" s={9} />
            <Ico n="leaf" s={9} />
            <Ico n="bulbg" s={10} />
            <Ico n="box" s={8} />
            <ComboLabel><Lat>1</Lat>轮廓实线层</ComboLabel>
            <ComboArrow>v</ComboArrow>
          </Combo>
          <HIcons cell={15} set="layersY layersB |6 node cornerd |5 angle slash faint" />
          <Spacer $w={111} />
          <HIcons cell={13.6} set="dot |3 pen grad |3 magnet |12 lblack lcyan lred lmag swatch greenA dimcyan ybrancht pinkI |8 gridsq house dimH ibeam diag circdot circ2 darkj cubered bell hH fieldbox tri curveu cirq key faint" />
        </ToolBand>
        <Main>
          <Dock>
            <DockCol $w={15.5}>
              <VIcons set="line pline ucurve polygon rectg arcb circleb cloud spline ellipse earc insert block point hatch hatchd region table A |11 ring ring ring |3 d3box bike cube cuber bike cubed bike faint" />
            </DockCol>
            <DockCol $w={16}>
              <VIcons set="erase clone mirror offset array move rotate scale stretch trim extend rectline rectgap join chamfer fillet explode |14 bluesq bluew bluebig bluew |11 pick cubeb cubeb cubeb cubeb cubeb cubeb faint" />
            </DockCol>
            <DockCol $w={15.5} $last>
              <VIcons cell={13.3} set="cdim cdiag arcdim ordin |5 cang hand cdiam ctri edit ih hh |4 leafy gtable cen dimA dslope dtwo dtilt |15 dline dtri dcurve |3 table2 pick" />
            </DockCol>
          </Dock>
          <Center>
            <CanvasRow>
              <Canvas>
                <CadDrawing />
              </Canvas>
              <VScroll>
                <ScrollBtn>⌃</ScrollBtn>
                <VThumb />
                <ScrollBtn>⌄</ScrollBtn>
              </VScroll>
              <RightDock>
                <RightPanel>
                  <VIcons set={rightIcons} />
                </RightPanel>
              </RightDock>
            </CanvasRow>
            <TabRow>
              <NavBtns>
                <NavBtn>|◂</NavBtn>
                <NavBtn>◂</NavBtn>
                <NavBtn>▸</NavBtn>
                <NavBtn>▸|</NavBtn>
              </NavBtns>
              <Tab $on $w={20}>模型</Tab>
              <Tab $w={26}><Mixed t="布局1" /></Tab>
              <TabSpace />
              <HScroll>
                <ScrollBtn $w={10}>‹</ScrollBtn>
                <Grow $w={160} />
                <ScrollBtn $w={9} />
                <Grow $w={74} />
                <ScrollBtn $w={9}>›</ScrollBtn>
              </HScroll>
            </TabRow>
          </Center>
        </Main>
        <CmdArea>
          <CmdBox>
            <CmdMain>
              <CmdHist>
                <CmdHistLine>选择对象：</CmdHistLine>
                <CmdHistLine>未找到对象。</CmdHistLine>
              </CmdHist>
              <CmdLine>
                <CmdLabel>命令：</CmdLabel>
                <CmdBar>
                  <ScrollBtn $w={9}>‹</ScrollBtn>
                  <CmdThumb />
                  <Grow $w={10} />
                  <ScrollBtn $w={9}>›</ScrollBtn>
                </CmdBar>
              </CmdLine>
            </CmdMain>
            <CmdScroll>
              <CmdScrollTrack>
                <ScrollBtn>⌃</ScrollBtn>
                <ScrollBtn>⌄</ScrollBtn>
              </CmdScrollTrack>
            </CmdScroll>
          </CmdBox>
        </CmdArea>
        <Status />
        <Taskbar>
          <StartBtn>
            <Ico n="winlogo" s={11} />
            开始
          </StartBtn>
          <Quick>
            <Ico n="ie" s={11} />
            <Ico n="desk" s={11} />
            <Ico n="fox" s={11} />
          </Quick>
          <TaskBtn $w={90}>
            <Ico n="folder" s={9} />
            <Mixed t="F:\抓图软件" />
          </TaskBtn>
          <TaskBtn $on $w={95}>
            <Ico n="logo" s={10} />
            <Mixed t="清华天河PCCAD200..." />
          </TaskBtn>
          <TrayIcon>
            <Ico n="tray" s={10} />
          </TrayIcon>
          <Clock>
            <Ico n="speaker" s={10} />
            13:28
          </Clock>
        </Taskbar>
        <Menu $x={300} $y={28} $w={125}>
          <MenuList items={MAIN} pad={15} />
        </Menu>
        <Menu $x={423} $y={299} $w={138} $top={1}>
          <MenuList items={SUB} pad={14} />
        </Menu>
        <Cursor width={10} height={14} viewBox="0 0 10 14">
          <path d="M1 1v10l2.500-2 1.500 4 2-1-1.500-3.500H9z" fill="#fff" stroke="#222" strokeWidth={0.8} />
        </Cursor>
        <RedRing />
        <OverSvg width={130} height={115} viewBox="0 0 130 115">
          <path d="M6 112L120 9" stroke="#d0202a" strokeWidth={1.5} fill="none" />
          <path d="M128 2L116 6l6 7z" fill="#d0202a" stroke="#d0202a" />
        </OverSvg>
        <Callout>开始自定义标题栏</Callout>
      </Win>
    </Page>
  );
}
